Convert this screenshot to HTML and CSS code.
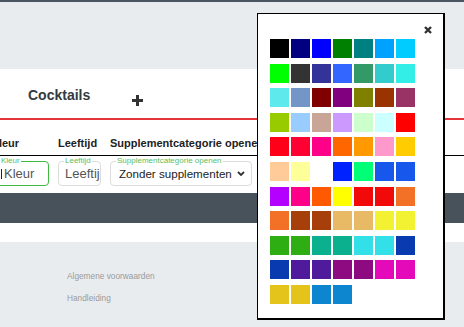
FILE: index.html
```html
<!DOCTYPE html>
<html lang="nl">
<head>
    <meta charset="UTF-8">
    <meta name="viewport" content="width=device-width, initial-scale=1.0">
    <title>Cocktails</title>
    <link rel="stylesheet" href="styles.css">
</head>
<body>

<div class="topbar"></div>
<div class="header"></div>

<div class="main">
    <div class="tabs">
        <span class="tab-title">Cocktails</span>
        <span class="tab-add">
            <svg width="11" height="11" viewBox="0 0 11 11"><rect x="4" y="0" width="3" height="11" fill="#333"/><rect x="0" y="4" width="11" height="3" fill="#333"/></svg>
        </span>
    </div>

    <div class="table">
        <div class="row head">
            <div class="th th-first">Kleur</div>
            <div class="th">Leeftijd</div>
            <div class="th">Supplementcategorie openen</div>
        </div>
        <div class="row inputs">
            <div class="field">
                <span class="field-label">Kleur</span>
                <input class="field-input active" type="text" placeholder="Kleur">
                <span class="caret"></span>
            </div>
            <div class="field">
                <span class="field-label">Leeftijd</span>
                <input class="field-input" type="text" placeholder="Leeftijd">
            </div>
            <div class="field">
                <span class="field-label">Supplementcategorie openen</span>
                <select class="field-input field-select">
                    <option>Zonder supplementen</option>
                </select>
                <svg class="chevron" width="8" height="5" viewBox="0 0 8 5"><path d="M1 1 L4 4 L7 1" stroke="#333" stroke-width="1.8" fill="none"/></svg>
            </div>
        </div>
    </div>
</div>

<div class="toolbar"></div>
<div class="spacer"></div>

<div class="footer">
    <a class="footer-link" href="#">Algemene voorwaarden</a>
    <a class="footer-link" href="#">Handleiding</a>
</div>

<div class="picker">
    <span class="picker-close">
        <svg width="8" height="8" viewBox="0 0 8 8"><path d="M1 1 L7 7 M7 1 L1 7" stroke="#333" stroke-width="2.4"/></svg>
    </span>
    <div class="swatches" id="swatches"></div>
</div>

<script>
    const colors = [
        '#000000', '#000080', '#0000ff', '#008000', '#008080', '#00a2ff', '#00ccff',
        '#00ff00', '#333333', '#333399', '#3366ff', '#339966', '#33cccc', '#33eee6',
        '#5eeaec', '#7395c8', '#800000', '#800080', '#808000', '#993300', '#993366',
        '#99cc00', '#99ccff', '#c8a596', '#cc99ff', '#ccffcc', '#ccffff', '#ff0000',
        '#ff0019', '#ff0033', '#ff0088', '#ff6600', '#ff9900', '#ff99cc', '#ffcc00',
        '#ffcc99', '#ffff99', '#ffffff', '#0022ff', '#00ff77', '#1757ec', '#1757ec',
        '#b400ff', '#ff0088', '#ff5a00', '#ffff00', '#f20a0a', '#f20a0a', '#f27127',
        '#f27127', '#a63f0a', '#a63f0a', '#e8ba66', '#e8ba66', '#f2f232', '#f2f232',
        '#2eae12', '#2eae12', '#0bb08f', '#0bb08f', '#33e0e8', '#33e0e8', '#0a3ab0',
        '#0a3ab0', '#501a9c', '#501a9c', '#8e0a80', '#8e0a80', '#e40aba', '#e40aba',
        '#e4c41a', '#e4c41a', '#0e86cf', '#0e86cf'
    ];

    const box = document.getElementById('swatches');
    colors.forEach(function (c) {
        const s = document.createElement('div');
        s.className = 'swatch';
        s.style.background = c;
        box.appendChild(s);
    });
</script>

</body>
</html>
```

FILE: styles.css
```css
body {
    font-family: "Liberation Sans", Arial, sans-serif;
    margin: 0;
    background: #e9ecef;
    color: #333;
    overflow: hidden;
}
.topbar {
    height: 2px;
    background: #4a5563;
}
.header {
    height: 67px;
    background: #e9ecef;
}
.main {
    background: #fff;
    overflow: hidden;
}
.tabs {
    height: 51px;
    box-sizing: border-box;
    border-bottom: 2px solid #e3343a;
    display: flex;
    align-items: flex-start;
    padding-left: 28px;
}
.tab-title {
    font-size: 14px;
    font-weight: bold;
    line-height: 16px;
    margin-top: 18px;
    color: #343a40;
}
.tab-add {
    margin-left: 42px;
    margin-top: 26px;
    line-height: 0;
}

.row {
    display: grid;
    grid-template-columns: 55px 43px 142px;
    column-gap: 9px;
    margin-left: -6px;
}
.head {
    grid-template-columns: 49px 43px 200px;
    margin-left: 0;
    padding: 15px 0 4px;
    border-bottom: 1px solid #000;
}
.th {
    font-size: 11px;
    font-weight: bold;
    line-height: 16px;
    white-space: nowrap;
    color: #222;
}
.th-first {
    margin-left: -9px;
}
.inputs {
    padding: 5px 0 7px;
}
.field {
    position: relative;
}
.field-input {
    box-sizing: border-box;
    width: 100%;
    height: 25px;
    border: 1px solid #dcdcdc;
    border-radius: 4px;
    padding: 0 0 0 6px;
    font-family: "Liberation Sans", Arial, sans-serif;
    font-size: 13px;
    color: #333;
    background: #fff;
    outline: none;
}
.field-input::placeholder {
    color: #555;
}
.field-input.active {
    border-color: #3fb93f;
    padding-left: 9px;
}
.field-select {
    appearance: none;
    -webkit-appearance: none;
    padding-left: 8px;
    font-size: 11.6px;
    color: #222;
}
.field-label {
    position: absolute;
    left: 6px;
    top: -5px;
    padding: 0 1px;
    font-size: 8px;
    line-height: 9px;
    color: #5cbd5c;
    background: #fff;
    white-space: nowrap;
}
.caret {
    position: absolute;
    left: 7px;
    top: 8px;
    width: 1px;
    height: 10px;
    background: #222;
}
.chevron {
    position: absolute;
    left: 127px;
    top: 10px;
}
.toolbar {
    height: 30px;
    background: #48525a;
}
.spacer {
    height: 19px;
    background: #fff;
}
.footer {
    display: flex;
    flex-direction: column;
    gap: 10px;
    padding: 28px 0 0 67px;
}
.footer-link {
    font-size: 8.3px;
    line-height: 12px;
    color: #9a9a9a;
    text-decoration: none;
}

.picker {
    position: absolute;
    left: 257px;
    top: 13px;
    width: 188px;
    height: 307px;
    box-sizing: border-box;
    border-style: solid;
    border-color: #000;
    border-width: 1px 2px 2px 1px;
    background: #fff;
    padding: 25px 0 0 12px;
}
.picker-close {
    position: absolute;
    left: 166px;
    top: 12px;
    line-height: 0;
}
.swatches {
    display: grid;
    grid-template-columns: repeat(7, 19px);
    grid-auto-rows: 19px;
    column-gap: 2px;
    row-gap: 5.6px;
}
```
